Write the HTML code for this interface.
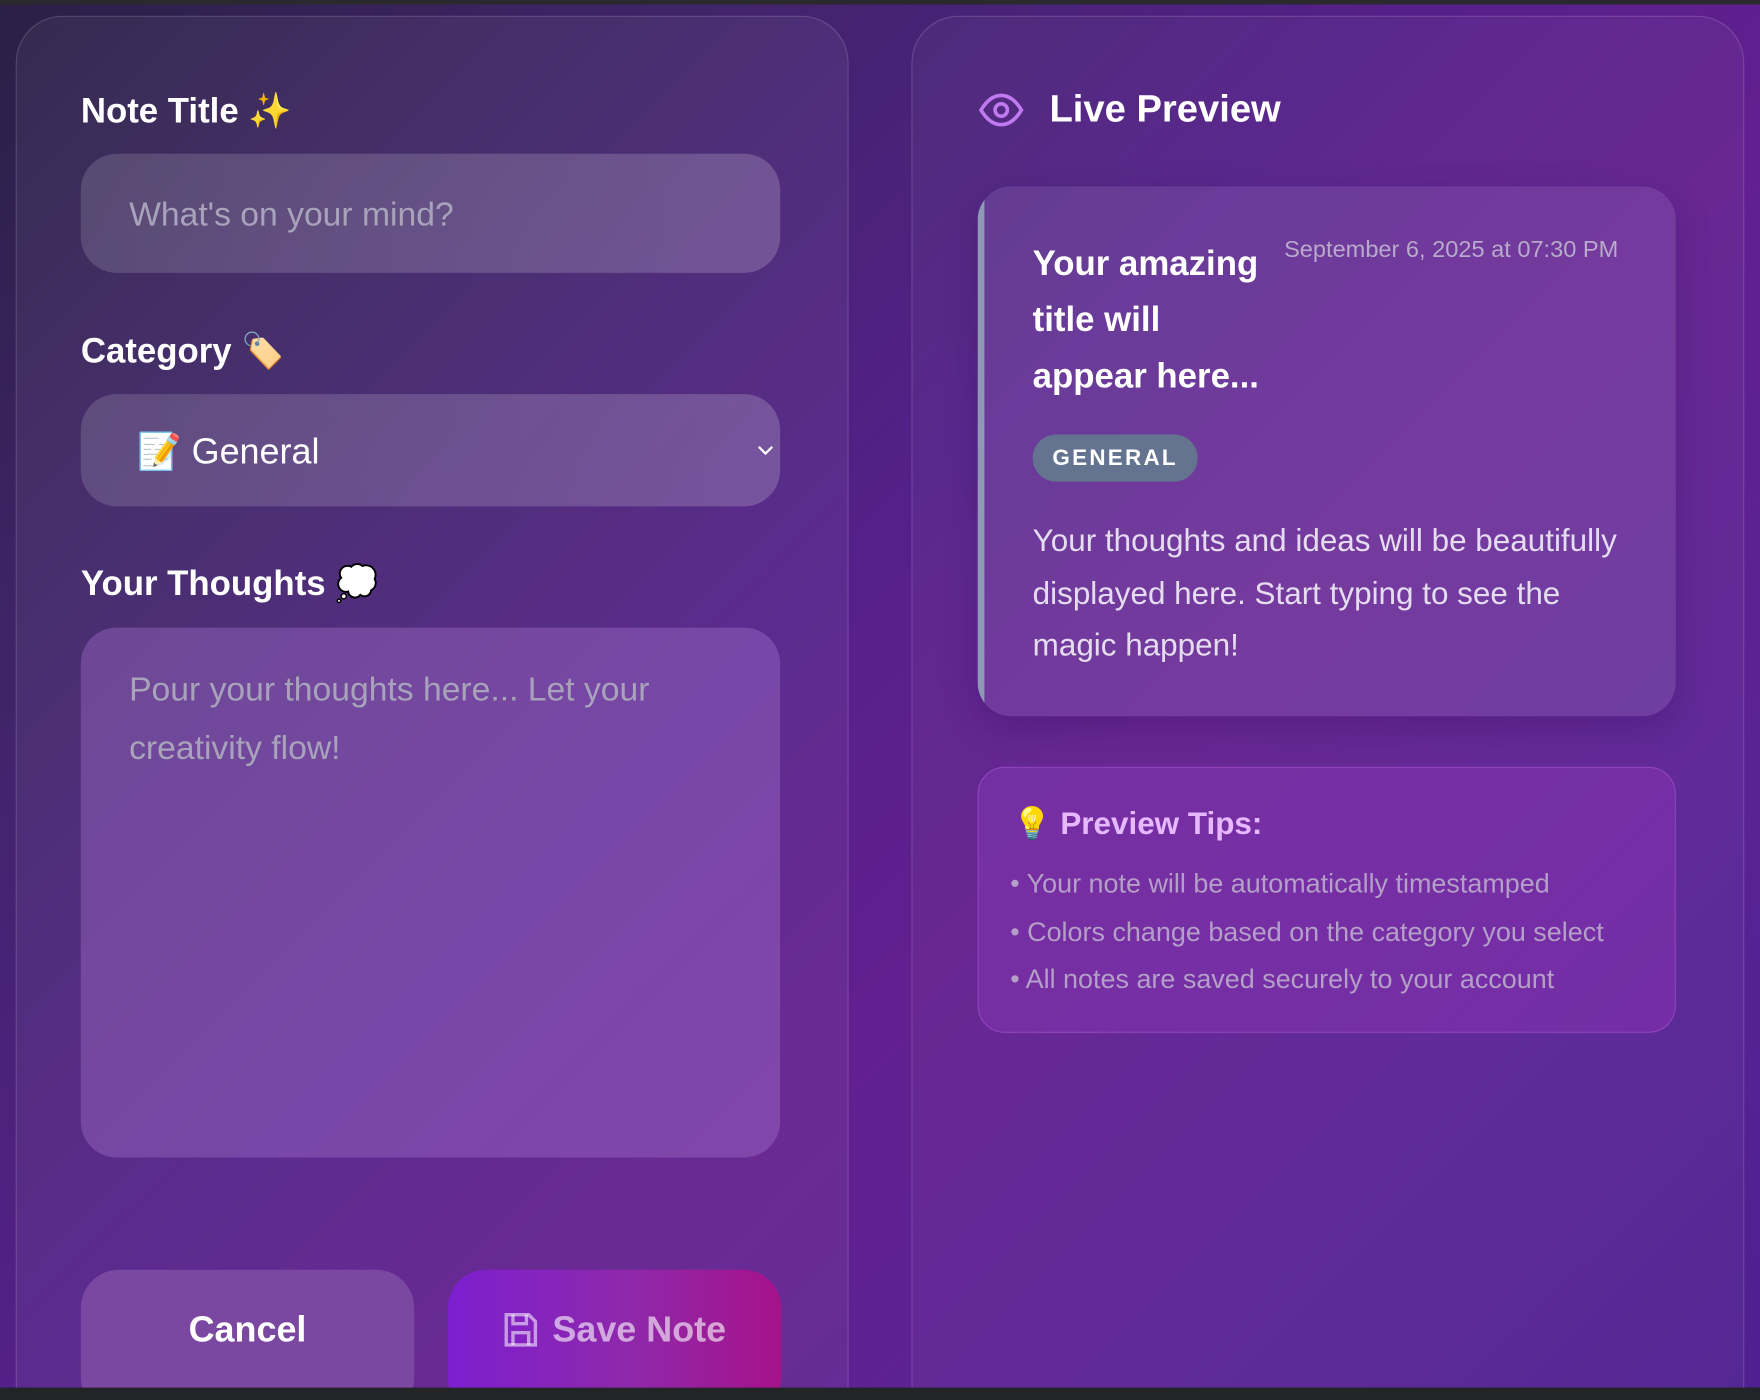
<!DOCTYPE html>
<html><head><meta charset="utf-8"><style>
html,body{margin:0;padding:0;width:1760px;height:1400px;overflow:hidden;background:#232428}
#w{position:absolute;left:0;top:0;width:1568px;height:1247px;transform:scale(1.12245,1.12269);transform-origin:0 0;font-family:"Liberation Sans","Noto Sans CJK JP",sans-serif;overflow:hidden;background:#232428}
#bg{position:absolute;left:0;top:4px;width:1568px;height:1232px;background:linear-gradient(135deg,#2a1f45 0%,#3e2466 20%,#55208a 45%,#621f8f 60%,#5a2394 80%,#4e2090 100%)}
.panel{position:absolute;top:14px;height:1260px;border-radius:42px;border:1px solid rgba(255,255,255,.14);background:rgba(255,255,255,.05)}
.lbl{position:absolute;left:72px;color:#fff;font-weight:bold;font-size:31px}
.inp{position:absolute;left:72px;width:623px;border-radius:32px;background:rgba(255,255,255,.16)}
.ph{position:absolute;color:#a8a3bb;font-size:30px}
.btn{position:absolute;top:1131px;height:130px;width:297px;border-radius:34px;font-weight:bold;font-size:32px;text-align:center;line-height:106px}
.tip{position:absolute;left:900px;color:#b49fc8;font-size:24px}
</style></head><body><div id="w">
<div id="bg"></div>
<div class="panel" style="left:14px;width:740px"></div>
<div class="panel" style="left:812px;width:740px;background:rgba(255,255,255,.04)"></div>

<div class="lbl" style="top:80px">Note Title ✨</div>
<div class="inp" style="top:137px;height:106px;background:linear-gradient(90deg,rgba(255,255,255,.14),rgba(255,255,255,.19))"><div class="ph" style="left:43px;top:38px">What's on your mind?</div></div>

<div class="lbl" style="top:294px">Category 🏷️</div>
<div class="inp" style="top:351px;height:100px;background:linear-gradient(90deg,rgba(255,255,255,.14),rgba(255,255,255,.19))">
<div style="position:absolute;left:50px;top:32px;color:#fff;font-size:32px">📝 General</div>
<svg style="position:absolute;left:602px;top:44px" width="16" height="12" viewBox="0 0 16 12"><path d="M2 3l6 6 6-6" stroke="#fff" stroke-width="2" fill="none"/></svg>
</div>

<div class="lbl" style="top:501px">Your Thoughts 💭</div>
<div class="inp" style="top:559px;height:472px;background:rgba(160,110,200,.42)">
<div class="ph" style="left:43px;top:30px;line-height:52px;width:540px">Pour your thoughts here... Let your creativity flow!</div></div>

<div class="btn" style="left:72px;background:#7a48a0;color:#fff">Cancel</div>
<div class="btn" style="left:399px;background:linear-gradient(90deg,#7c1fd0,#8f28aa 55%,#a6128a);color:rgba(255,255,255,.6)">
<svg style="vertical-align:-6px;margin-right:12px" width="32" height="34" viewBox="0 0 32 34" fill="none" stroke="rgba(255,255,255,.55)" stroke-width="3"><path d="M3 4h20l6 6v21H3z"/><path d="M9 4v8h12V4M9 31V20h14v11"/></svg>Save Note</div>

<svg style="position:absolute;left:872px;top:82px" width="40" height="32" viewBox="0 0 40 32" fill="none" stroke="#c07af0" stroke-width="3.2"><path d="M2 16C8 6 14 3 20 3s12 3 18 13C32 26 26 29 20 29S8 26 2 16z"/><circle cx="20" cy="16" r="5.5"/></svg>
<div style="position:absolute;left:935px;top:78px;color:#fff;font-weight:bold;font-size:34px">Live Preview</div>

<div style="position:absolute;left:871px;top:166px;width:622px;height:472px;border-radius:30px;background:rgba(200,180,230,.14);box-shadow:0 10px 30px rgba(40,0,80,.25);overflow:hidden">
<div style="position:absolute;left:0;top:0;width:6px;height:100%;background:#8d9ab4"></div></div>
<div style="position:absolute;left:920px;top:210px;width:220px;color:#fff;font-weight:bold;font-size:31px;line-height:50px">Your amazing title will appear here...</div>
<div style="position:absolute;left:1144px;top:211px;color:#b9a9cc;font-size:21px">September 6, 2025 at 07:30 PM</div>
<div style="position:absolute;left:920px;top:387px;width:147px;height:42px;border-radius:21px;background:#637390;color:#fff;font-weight:bold;font-size:20px;letter-spacing:2px;text-align:center;line-height:42px">GENERAL</div>
<div style="position:absolute;left:920px;top:459px;width:540px;color:#e6dcf0;font-size:28px;line-height:46.5px">Your thoughts and ideas will be beautifully displayed here. Start typing to see the magic happen!</div>

<div style="position:absolute;left:871px;top:683px;width:620px;height:235px;border-radius:24px;border:1px solid rgba(210,120,255,.3);background:linear-gradient(135deg,rgba(150,70,200,.3),rgba(160,50,190,.35))"></div>
<div style="position:absolute;left:902px;top:717px;color:#e6b8ff;font-weight:bold;font-size:28px">💡 Preview Tips:</div>
<div class="tip" style="top:774px">• Your note will be automatically timestamped</div>
<div class="tip" style="top:817px">• Colors change based on the category you select</div>
<div class="tip" style="top:859px">• All notes are saved securely to your account</div>
<div style="position:absolute;left:0;top:0;width:1568px;height:4px;background:#2a2a2e"></div>
<div style="position:absolute;left:0;top:1236px;width:1568px;height:11px;background:#232428"></div>
</div></body></html>
